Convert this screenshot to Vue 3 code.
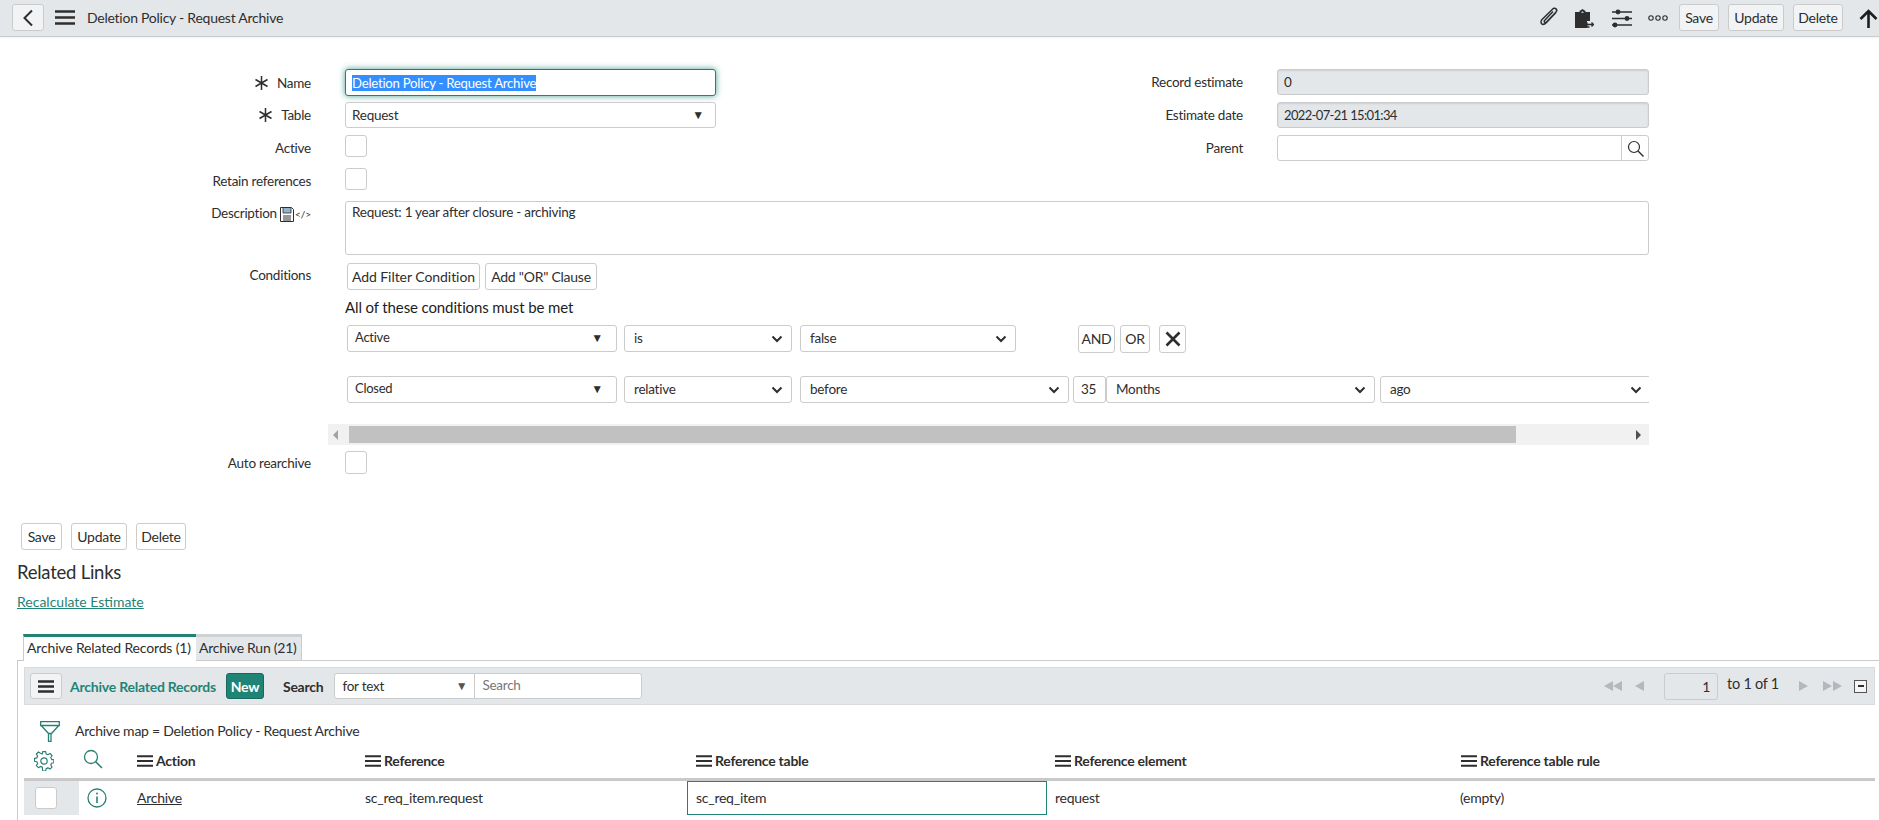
<template>
  <div class="page">
    <header class="topbar">
      <button type="button" class="btn back-btn" aria-label="Back">
        <svg width="12" height="18" viewBox="0 0 12 18"><path d="M10 1.500 2.500 9l7.500 7.500" fill="none" stroke="#2e2e2e" stroke-width="2"/></svg>
      </button>
      <svg class="menu-icon" width="20" height="15" viewBox="0 0 20 15"><path d="M0 1.500h20M0 7.500h20M0 13.500h20" stroke="#2e2e2e" stroke-width="2.600"/></svg>
      <h1 class="title">Deletion Policy - Request Archive</h1>
      <div class="top-actions">
        <svg class="ta-clip" width="21" height="20" viewBox="0 0 21 20"><path d="M16.500 5 6.500 15.500c-1.500 1.500-3.400 1.700-4.400.7s-.8-2.900.7-4.400L13 1.700c1-1 2.600-1.200 3.500-.3s.8 2.400-.2 3.400L7 14.500c-.7.700-1.500.8-2 .3s-.4-1.300.3-2L13.500 4" transform="translate(1.500 .500)" fill="none" stroke="#2e2e2e" stroke-width="1.500"/></svg>
        <svg class="ta-board" width="19" height="19" viewBox="0 0 19 19"><path d="M0 3h4.500V2L7.500 0l3 2v1H15v9h-3v7H0z" fill="#2e2e2e"/><path d="M6 3.800 7.500 2.200 9 3.800z" fill="#e4e7ea"/><path d="M12 13.500v4.500h2.500M12.500 15.500h6m-2-2 2 2-2 2" fill="none" stroke="#2e2e2e" stroke-width="1.300"/></svg>
        <svg class="ta-sliders" width="20" height="19" viewBox="0 0 20 19"><path d="M0 3h20M0 9.500h20M0 16h20" stroke="#2e2e2e" stroke-width="1.500"/><circle cx="6" cy="3" r="2.400" fill="#2e2e2e"/><circle cx="15" cy="9.500" r="2.400" fill="#2e2e2e"/><circle cx="3" cy="16" r="2.400" fill="#2e2e2e"/></svg>
        <svg class="ta-more" width="20" height="6" viewBox="0 0 20 6"><circle cx="3" cy="3" r="2.200" fill="none" stroke="#2e2e2e" stroke-width="1.100"/><circle cx="10" cy="3" r="2.200" fill="none" stroke="#2e2e2e" stroke-width="1.100"/><circle cx="17" cy="3" r="2.200" fill="none" stroke="#2e2e2e" stroke-width="1.100"/></svg>
        <button type="button" class="btn bar-btn save">Save</button>
        <button type="button" class="btn bar-btn update">Update</button>
        <button type="button" class="btn bar-btn delete">Delete</button>
        <svg class="ta-up" width="19" height="19" viewBox="0 0 19 19"><path d="M9.500 19V2.500M1.500 10l8-8 8 8" fill="none" stroke="#1d1d1d" stroke-width="2.600"/></svg>
      </div>
    </header>

    <main class="form">
      <div class="form-grid">
        <label class="lbl name-lbl"><svg class="star" width="13" height="14" viewBox="0 0 13 14"><path d="M6.500 0v14M.5 3.500l12 7M.5 10.500l12-7" stroke="#2e2e2e" stroke-width="1.500"/></svg>Name</label>
        <div class="field focused"><span class="selected">Deletion Policy - Request Archive</span></div>
        <label class="lbl">Record estimate</label>
        <div class="field disabled">0</div>

        <label class="lbl"><svg class="star" width="13" height="14" viewBox="0 0 13 14"><path d="M6.500 0v14M.5 3.500l12 7M.5 10.500l12-7" stroke="#2e2e2e" stroke-width="1.500"/></svg>Table</label>
        <div class="field select-field">Request<span class="tri">▼</span></div>
        <label class="lbl">Estimate date</label>
        <div class="field disabled date">2022-07-21 15:01:34</div>

        <label class="lbl">Active</label>
        <div class="check-cell"><span class="check"></span></div>
        <label class="lbl">Parent</label>
        <div class="field parent">
          <span class="parent-btn">
            <svg width="17" height="17" viewBox="0 0 17 17"><circle cx="7" cy="7" r="5.500" fill="none" stroke="#2e2e2e" stroke-width="1.200"/><path d="M11 11l5.500 5.500" stroke="#2e2e2e" stroke-width="1.400"/></svg>
          </span>
        </div>

        <label class="lbl">Retain references</label>
        <div class="check-cell"><span class="check"></span></div>
        <span></span>
        <span></span>

        <label class="lbl desc-lbl">Description
          <svg class="floppy" width="14" height="15" viewBox="0 0 14 15"><path d="M.5.500h11l2 2v12H.5z" fill="none" stroke="#2e2e2e"/><path d="M3 1v5h8V1" fill="#8fb4c9" stroke="#2e2e2e" stroke-width=".8"/><path d="M3 9h8M3 11h8M3 13h8" stroke="#2e2e2e"/></svg><span class="code">&lt;/&gt;</span>
        </label>
        <div class="field area">Request: 1 year after closure - archiving</div>
      </div>

      <div class="cond">
        <label class="lbl cond-lbl">Conditions</label>
        <div class="cond-body">
          <div class="cond-actions">
            <button type="button" class="btn add-filter">Add Filter Condition</button>
            <button type="button" class="btn add-or">Add "OR" Clause</button>
          </div>
          <p class="met">All of these conditions must be met</p>
          <div class="cond-row first">
            <div class="sel field-sel w270">Active<span class="tri">▼</span></div>
            <div class="sel w168">is<svg class="chev" width="12" height="8" viewBox="0 0 12 8"><path d="M1.500 1.500 6 6l4.500-4.500" fill="none" stroke="#2e2e2e" stroke-width="2"/></svg></div>
            <div class="sel w216">false<svg class="chev" width="12" height="8" viewBox="0 0 12 8"><path d="M1.500 1.500 6 6l4.500-4.500" fill="none" stroke="#2e2e2e" stroke-width="2"/></svg></div>
            <button type="button" class="btn mini and">AND</button>
            <button type="button" class="btn mini or">OR</button>
            <button type="button" class="btn mini del" aria-label="Remove">
              <svg width="16" height="16" viewBox="0 0 16 16"><path d="M1.500 1.500l13 13M14.500 1.500l-13 13" stroke="#2e2e2e" stroke-width="2.600"/></svg>
            </button>
          </div>
          <div class="cond-row second">
            <div class="sel field-sel w270">Closed<span class="tri">▼</span></div>
            <div class="sel w168">relative<svg class="chev" width="12" height="8" viewBox="0 0 12 8"><path d="M1.500 1.500 6 6l4.500-4.500" fill="none" stroke="#2e2e2e" stroke-width="2"/></svg></div>
            <div class="sel w269">before<svg class="chev" width="12" height="8" viewBox="0 0 12 8"><path d="M1.500 1.500 6 6l4.500-4.500" fill="none" stroke="#2e2e2e" stroke-width="2"/></svg></div>
            <div class="num">35</div>
            <div class="sel months">Months<svg class="chev" width="12" height="8" viewBox="0 0 12 8"><path d="M1.500 1.500 6 6l4.500-4.500" fill="none" stroke="#2e2e2e" stroke-width="2"/></svg></div>
            <div class="sel ago">ago<svg class="chev" width="12" height="8" viewBox="0 0 12 8"><path d="M1.500 1.500 6 6l4.500-4.500" fill="none" stroke="#2e2e2e" stroke-width="2"/></svg></div>
          </div>
          <div class="hscroll">
            <span class="arrow left"></span>
            <span class="thumb"></span>
            <span class="arrow right"></span>
          </div>
        </div>
      </div>

      <div class="auto-row">
        <label class="lbl">Auto rearchive</label>
        <span class="check"></span>
      </div>

      <div class="form-actions">
        <button type="button" class="btn form-btn f-save">Save</button>
        <button type="button" class="btn form-btn f-update">Update</button>
        <button type="button" class="btn form-btn f-delete">Delete</button>
      </div>

      <h2 class="related">Related Links</h2>
      <a class="recalc" href="#">Recalculate Estimate</a>
    </main>

    <nav class="tabs">
      <div class="tab active">Archive Related Records (1)</div>
      <div class="tab">Archive Run (21)</div>
    </nav>

    <section class="panel">
      <div class="list-bar">
        <button type="button" class="btn list-menu" aria-label="List menu">
          <svg width="16" height="13" viewBox="0 0 16 13"><path d="M0 1.500h16M0 6.500h16M0 11.500h16" stroke="#2e2e2e" stroke-width="2.400"/></svg>
        </button>
        <span class="list-title">Archive Related Records</span>
        <button type="button" class="new-btn">New</button>
        <span class="search-lbl">Search</span>
        <div class="search-group">
          <div class="search-type">for text<span class="tri small">▼</span></div>
          <div class="search-input">Search</div>
        </div>
        <div class="pager">
          <svg class="pg first" width="18" height="10" viewBox="0 0 18 10"><path d="M9 0v10L0 5zM18 0v10L9 5z" fill="#b4b8bc"/></svg>
          <svg class="pg prev" width="9" height="10" viewBox="0 0 9 10"><path d="M9 0v10L0 5z" fill="#b4b8bc"/></svg>
          <div class="page-input">1</div>
          <span class="page-text">to 1 of 1</span>
          <svg class="pg next" width="9" height="10" viewBox="0 0 9 10"><path d="M0 0v10l9-5z" fill="#b4b8bc"/></svg>
          <svg class="pg last" width="19" height="10" viewBox="0 0 19 10"><path d="M0 0v10l9-5zM10 0v10l9-5z" fill="#b4b8bc"/></svg>
          <span class="collapse"><i></i></span>
        </div>
      </div>

      <div class="breadcrumb">
        <svg class="funnel" width="20" height="21" viewBox="0 0 20 21"><path d="M.7.700h18.600v3.800H.7zM1.200 4.500 8.500 12.500h3l7.300-8M8.500 12.500v7.800h2.500v-7.800" fill="none" stroke="#2a7f73" stroke-width="1.300"/></svg>
        <span>Archive map = Deletion Policy - Request Archive</span>
      </div>

      <div class="table-head">
        <div class="cell-gear">
          <svg width="20" height="20" viewBox="0 0 20 20"><path d="M8.500 1h3l.5 2.400 1.800.8 2.100-1.300 2.100 2.100-1.300 2.100.8 1.800 2.400.5v3l-2.400.5-.8 1.800 1.300 2.100-2.100 2.100-2.100-1.300-1.800.8-.5 2.400h-3L8 16.900l-1.800-.8-2.100 1.300L2 15.300l1.300-2.100-.8-1.800L.1 10.900v-3l2.400-.5.800-1.800L2 3.500l2.100-2.100 2.100 1.300L8 3.400z" transform="translate(.400 -.400) scale(.98)" fill="none" stroke="#2a7f73" stroke-width="1.200" stroke-linejoin="round"/><circle cx="10" cy="10" r="3.200" fill="none" stroke="#2a7f73" stroke-width="1.200"/></svg>
        </div>
        <div class="cell-search">
          <svg width="20" height="20" viewBox="0 0 20 20"><circle cx="8" cy="8" r="6.500" fill="none" stroke="#2a7f73" stroke-width="1.300"/><path d="M12.500 12.500 19 19" stroke="#2a7f73" stroke-width="1.500"/></svg>
        </div>
        <div v-for="col in columns" :key="col.name" class="col-head" :style="{ width: col.width + 'px' }">
          <svg width="16" height="12" viewBox="0 0 16 12"><path d="M0 1.200h16M0 6h16M0 10.800h16" stroke="#2e2e2e" stroke-width="2"/></svg>
          <span>{{ col.name }}</span>
        </div>
      </div>

      <div class="table-row">
        <div class="row-check"><span class="check"></span></div>
        <div class="row-info">
          <svg width="20" height="20" viewBox="0 0 20 20"><circle cx="10" cy="10" r="9" fill="none" stroke="#2a7f73" stroke-width="1.300"/><path d="M10 8.500v6.500" stroke="#2a7f73" stroke-width="1.600"/><circle cx="10" cy="5.500" r="1" fill="#2a7f73"/></svg>
        </div>
        <div class="cell action"><a href="#">Archive</a></div>
        <div class="cell ref">sc_req_item.request</div>
        <div class="cell picked">sc_req_item</div>
        <div class="cell el">request</div>
        <div class="cell">(empty)</div>
      </div>
    </section>
  </div>
</template>

<script setup>
const columns = [
  { name: 'Action', width: 228 },
  { name: 'Reference', width: 331 },
  { name: 'Reference table', width: 359 },
  { name: 'Reference element', width: 406 },
  { name: 'Reference table rule', width: 300 }
]
</script>

<style>
html, body { margin: 0; background: #fff; }
</style>

<style scoped>
.page {
  width: 1879px;
  height: 820px;
  overflow: hidden;
  position: relative;
  background: #fff;
  color: #2e2e2e;
  font-family: Lato, "Noto Sans", sans-serif;
  font-size: 14px;
  letter-spacing: -0.25px;
}
button { font: inherit; letter-spacing: inherit; color: inherit; }

.btn {
  background: #fff;
  border: 1px solid #cbcbcb;
  border-radius: 3px;
  padding: 0;
  display: inline-flex;
  align-items: center;
  justify-content: center;
}

/* top bar */
.topbar {
  height: 36px;
  border-bottom: 1px solid #c9cbcd;
  background: #e4e7ea;
  display: flex;
  align-items: center;
  box-shadow: 0 1px 2px rgba(0, 0, 0, 0.06);
  padding-left: 12px;
}
.back-btn { width: 32px; height: 27px; background: #f1f3f4; margin-top: -1px; }
.menu-icon { margin-left: 11px; margin-right: 12px; margin-top: -1px; }
.title { font-size: 14px; font-weight: 400; margin: -2px 0 0; }
.top-actions { margin-left: auto; display: flex; align-items: center; padding-right: 1px; }
.ta-clip { margin-right: 16px; margin-top: -3px; }
.ta-board { margin-right: 18px; margin-top: 1px; }
.ta-sliders { margin-right: 16px; }
.ta-more { margin-right: 11px; }
.bar-btn { height: 27px; background: #f1f3f4; font-size: 14px; margin-top: -1px; }
.save { width: 40px; margin-right: 9px; }
.update { width: 56px; margin-right: 9px; }
.delete { width: 50px; margin-right: 16px; }

/* form */
.form { padding-top: 32px; }
.form-grid {
  display: grid;
  grid-template-columns: 345px 371px 561px 372px;
  grid-template-rows: repeat(4, 26px) 54px;
  row-gap: 7px;
}
.lbl {
  display: flex;
  align-items: center;
  justify-content: flex-end;
  padding-right: 34px;
  font-size: 13.500px;
}
.name-lbl { padding-top: 2px; }
.star { margin-right: 9px; }
.field {
  box-sizing: border-box;
  border: 1px solid #cbcbcb;
  border-radius: 3px;
  background: #fff;
  display: flex;
  align-items: center;
  padding-left: 6px;
  height: 26px;
  font-size: 13.500px;
  position: relative;
}
.focused {
  height: 27px;
  border-color: #1f8476;
  box-shadow: 0 0 6px rgba(31, 132, 118, 0.8);
  font-size: 13.200px;
}
.selected { background: #338fff; color: #fff; }
.select-field { justify-content: space-between; padding-right: 11px; padding-bottom: 1px; }
.tri { font-size: 12px; color: #2e2e2e; }
.tri.small { color: #555; font-size: 12px; }
.disabled { background: #e4e7ea; box-shadow: inset 0 1px 2px rgba(0, 0, 0, 0.1); }
.date { font-size: 13px; letter-spacing: -0.65px; }
.parent { justify-content: flex-end; padding: 0; }
.parent-btn {
  width: 26px;
  height: 100%;
  border-left: 1px solid #cbcbcb;
  display: flex;
  align-items: center;
  justify-content: center;
}
.check-cell { display: flex; align-items: flex-start; }
.check {
  display: block;
  box-sizing: border-box;
  width: 22px;
  height: 22px;
  border: 1px solid #cbcbcb;
  border-radius: 3px;
  background: #fff;
}
.desc-lbl { align-items: flex-start; padding-top: 4px; padding-right: 34px; }
.floppy { margin-left: 3px; margin-top: 2px; }
.code { font-size: 10px; margin-left: 1px; margin-top: 3px; letter-spacing: 0; }
.area {
  grid-column: 2 / 5;
  height: 54px;
  align-items: flex-start;
  padding-top: 2px;
}

/* conditions */
.cond { display: flex; margin-top: 8px; }
.cond-lbl { width: 345px; box-sizing: border-box; flex: none; height: 26px; align-items: center; padding-bottom: 3px; }
.cond-body { width: 1304px; }
.cond-actions { display: flex; gap: 5px; padding-left: 2px; }
.add-filter { width: 133px; height: 27px; letter-spacing: -0.05px; }
.add-or { width: 112px; height: 27px; }
.met { margin: 8px 0 0; height: 18px; line-height: 18px; font-size: 15px; letter-spacing: -0.12px; color: #1d1d1d; }
.cond-row { display: flex; padding-left: 2px; overflow: hidden; }
.cond-row.first { margin-top: 9px; height: 28px; }
.cond-row.second { margin-top: 23px; height: 27px; }
.sel {
  box-sizing: border-box;
  height: 27px;
  flex: none;
  border: 1px solid #cbcbcb;
  border-radius: 3px;
  background: #fff;
  display: flex;
  align-items: center;
  justify-content: space-between;
  padding: 0 8px 2px 9px;
  font-size: 13.500px;
  margin-right: 8px;
}
.sel .chev { margin-top: 2px; }
.field-sel { padding: 0 13px 3px 7px; font-size: 13px; }
.w270 { width: 270px; margin-right: 7px; }
.w168 { width: 168px; }
.w216 { width: 216px; margin-right: 62px; }
.w269 { width: 269px; margin-right: 4px; }
.num {
  box-sizing: border-box;
  width: 33px;
  height: 27px;
  flex: none;
  border: 1px solid #cbcbcb;
  border-radius: 3px;
  display: flex;
  align-items: center;
  padding: 0 0 2px 7px;
  font-size: 13.500px;
}
.months { width: 269px; margin-right: 5px; margin-left: 0; }
.ago { width: 271px; margin-right: 0; }
.mini { height: 28px; font-size: 14px; }
.mini.and, .mini.or { padding-bottom: 2px; }
.and { width: 37px; margin-right: 5px; }
.or { width: 30px; margin-right: 9px; }
.del { width: 27px; }

.hscroll {
  margin: 21px 0 0 -17px;
  height: 21px;
  width: 1321px;
  background: #f1f1f1;
  display: flex;
  align-items: center;
}
.arrow { width: 0; height: 0; border-style: solid; flex: none; }
.arrow.left { border-width: 5px 5px 5px 0; border-color: transparent #a3a3a3 transparent transparent; margin: 0 11px 0 5px; }
.arrow.right { border-width: 5px 0 5px 5px; border-color: transparent transparent transparent #505050; margin: 0 8px 0 auto; }
.thumb { width: 1167px; height: 17px; background: #c1c1c1; flex: none; }

.auto-row {
  display: flex;
  align-items: center;
  margin-top: 6px;
}
.auto-row .lbl { width: 345px; box-sizing: border-box; flex: none; }
.auto-row .check { height: 23px; }

.form-actions { display: flex; padding-left: 21px; margin-top: 49px; }
.form-btn { height: 27px; font-size: 14px; padding-bottom: 1px; }
.f-save { width: 41px; margin-right: 9px; }
.f-update { width: 56px; margin-right: 9px; }
.f-delete { width: 50px; }

.related { margin: 10px 0 0 17px; font-size: 18.500px; font-weight: 400; line-height: 24px; color: #2e2e2e; }
.recalc {
  display: block;
  width: fit-content;
  margin: 9px 0 0 17px;
  line-height: 18px;
  font-size: 14px;
  letter-spacing: 0;
  color: #1f8476;
  text-decoration: underline;
}

/* tabs */
.tabs { display: flex; padding-left: 23px; margin-top: 23px; }
.tab {
  box-sizing: border-box;
  height: 26px;
  padding: 0 3px;
  font-size: 14px;
  background: #e4e7ea;
  border-top: 3px solid #cfd1d3;
  border-right: 1px solid #cbcbcb;
  line-height: 22px;
  width: 106px;
}
.tab.active {
  width: 173px;
  background: #fff;
  letter-spacing: -0.15px;
  border-top-color: #1f8476;
  border-left: 1px solid #cbcbcb;
  border-right: none;
  height: 27px;
  margin-bottom: -1px;
  position: relative;
  z-index: 1;
}

.panel {
  margin-left: 17px;
  border-left: 1px solid #cbcbcb;
  border-top: 1px solid #cbcbcb;
  padding: 6px 4px 0 6px;
  height: 160px;
}
.list-bar {
  height: 38px;
  box-sizing: border-box;
  background: #e4e7ea;
  border: 1px solid #d8dadc;
  display: flex;
  align-items: center;
  padding-left: 5px;
}
.list-menu { width: 32px; height: 26px; background: #f1f3f4; flex: none; }
.list-title { font-weight: 700; color: #1f8476; margin-left: 8px; font-size: 14px; letter-spacing: -0.23px; }
.new-btn {
  margin-left: 10px;
  width: 38px;
  height: 26px;
  border: 1px solid #17695e;
  border-radius: 3px;
  background: #1f8476;
  color: #fff;
  font-weight: 700;
  padding: 0;
}
.search-lbl { margin-left: 19px; font-weight: 700; font-size: 14px; }
.search-group {
  margin-left: 11px;
  display: flex;
  height: 26px;
  margin-top: -1px;
  border: 1px solid #cbcbcb;
  border-radius: 3px;
  background: #fff;
  box-sizing: border-box;
  width: 308px;
}
.search-type {
  width: 140px;
  flex: none;
  box-sizing: border-box;
  border-right: 1px solid #cbcbcb;
  padding: 0 7px;
  display: flex;
  align-items: center;
  justify-content: space-between;
  font-size: 13.500px;
}
.search-input { padding: 0 0 2px 7px; color: #777; display: flex; align-items: center; font-size: 13.500px; }
.pager { margin-left: auto; display: flex; align-items: center; padding-right: 7px; }
.pg { flex: none; }
.first { margin-right: 13px; }
.prev { margin-right: 20px; }
.page-input {
  box-sizing: border-box;
  width: 54px;
  height: 27px;
  border: 1px solid #cbcbcb;
  border-radius: 3px;
  text-align: right;
  padding-right: 7px;
  line-height: 25px;
}
.page-text { margin: -5px 20px 0 9px; font-size: 14.500px; }
.next { margin-right: 15px; }
.last { margin-right: 12px; }
.collapse {
  box-sizing: border-box;
  width: 13px;
  height: 13px;
  border: 1px solid #555;
  background: #f5f5f5;
  display: flex;
  align-items: center;
  justify-content: center;
}
.collapse i { display: block; width: 6px; height: 2px; background: #2e2e2e; }

.breadcrumb { display: flex; align-items: center; height: 26px; margin-top: 12px; padding-left: 16px; }
.funnel { margin-right: 15px; margin-top: 3px; }
.table-head { display: flex; align-items: center; height: 35px; border-bottom: 3px solid #c9c9c9; width: 1851px; }
.cell-gear { width: 59px; flex: none; padding-left: 10px; box-sizing: border-box; display: flex; }
.cell-search { width: 54px; flex: none; margin-top: -4px; display: flex; }
.col-head { flex: none; display: flex; align-items: center; gap: 3px; font-weight: 700; box-sizing: border-box; }
.table-row { display: flex; height: 34px; align-items: center; }
.row-check { width: 55px; height: 34px; background: #e4e7ea; flex: none; display: flex; align-items: center; padding-left: 11px; box-sizing: border-box; }
.row-info { width: 58px; padding-left: 8px; box-sizing: border-box; flex: none; display: flex; }
.cell { flex: none; box-sizing: border-box; font-size: 14px; padding-bottom: 2px; }
.action { width: 228px; }
.action a { color: #2e2e2e; text-decoration: underline; }
.ref { width: 322px; }
.picked {
  width: 360px;
  height: 34px;
  border: 1px solid #1f8476;
  padding-left: 8px;
  display: flex;
  align-items: center;
  margin-right: 8px;
}
.el { width: 405px; }
</style>
